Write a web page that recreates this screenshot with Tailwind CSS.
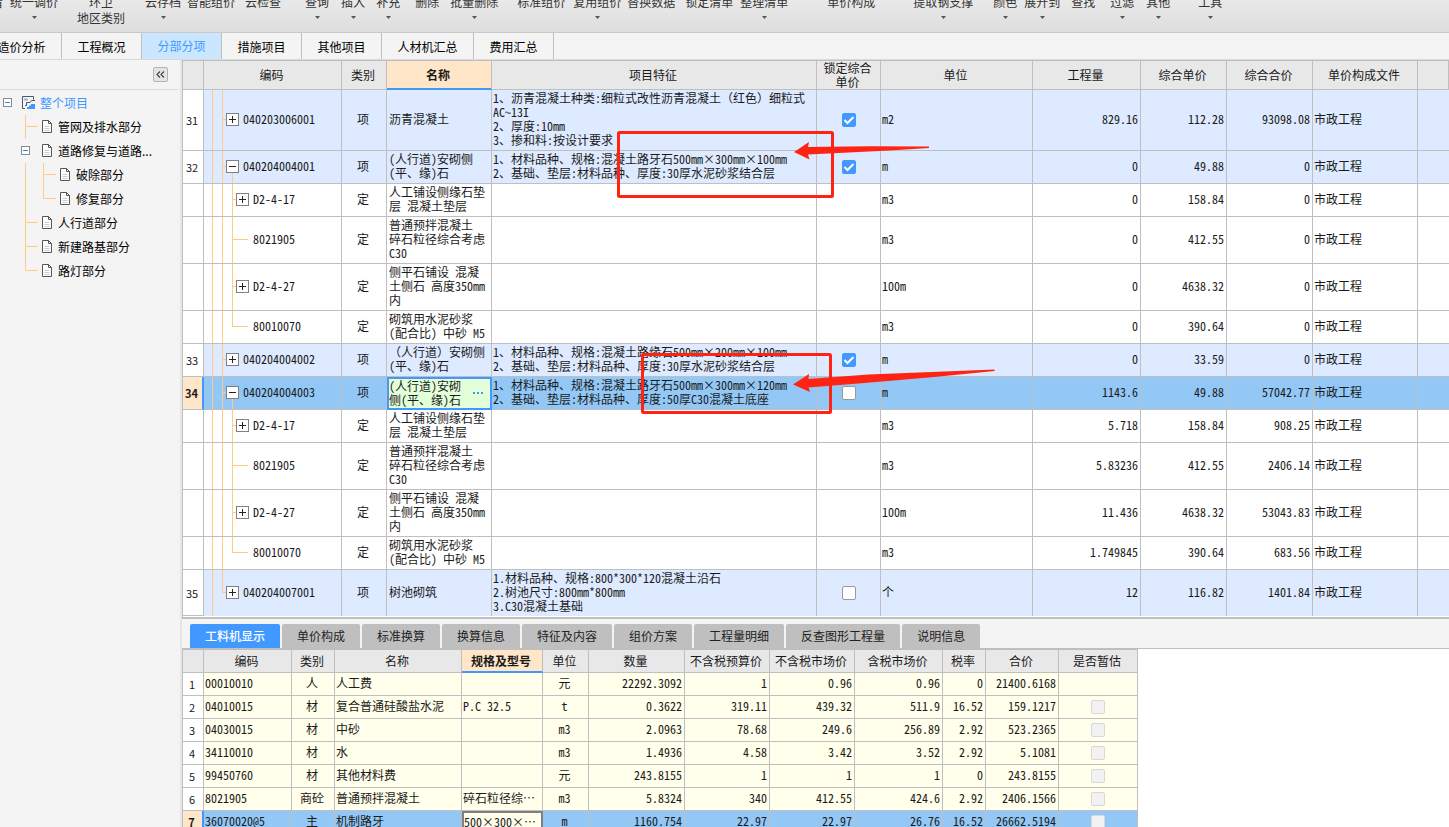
<!DOCTYPE html>
<html lang="zh-CN">
<head>
<meta charset="utf-8">
<title>分部分项</title>
<script src="https://cdn.jsdelivr.net/npm/@tailwindcss/browser@4"></script>
</head>
<body class="relative flex h-screen flex-col overflow-hidden bg-[#f4f4f4] font-['Noto_Sans_CJK_SC','Noto_Sans',sans-serif] text-[12px] leading-4 text-[#1a1a1a]">

<header class="h-[33px] shrink-0 overflow-hidden border-b border-[#c9c9c9] bg-linear-to-b from-[#e9e9e9] to-[#dedede]">
  <div id="toolbar" class="-mt-1.5 flex items-start whitespace-nowrap text-[#333]"></div>
</header>

<nav class="h-[27px] shrink-0 overflow-hidden border-b border-[#d9d9d9] bg-[#f4f4f4]">
  <div class="-ml-[18px] flex h-full text-black">
    <button class="w-20 border-r border-[#c0c0c0] pt-0.5 pb-px">造价分析</button>
    <button class="w-20 border-r border-[#c0c0c0] pt-0.5 pb-px">工程概况</button>
    <button class="w-20 border-r border-[#c0c0c0] bg-[#cbe6ff] pb-px text-[#4199ff]">分部分项</button>
    <button class="w-20 border-r border-[#c0c0c0] pt-0.5 pb-px">措施项目</button>
    <button class="w-20 border-r border-[#c0c0c0] pt-0.5 pb-px">其他项目</button>
    <button class="w-[92px] border-r border-[#c0c0c0] pt-0.5 pb-px">人材机汇总</button>
    <button class="w-20 border-r border-[#c0c0c0] pt-0.5 pb-px">费用汇总</button>
  </div>
</nav>

<main class="flex min-h-0 flex-1">
  <aside class="w-[180px] shrink-0 text-black">
    <div class="mr-0.5 flex h-[30px] items-center justify-end border-b border-[#dcdcdc] pr-2.5">
      <button aria-label="收起" class="flex size-[15px] items-center justify-center rounded-xs border border-[#b4b4b4] bg-[#e4e4e4]">
        <svg width="9" height="7" viewBox="0 0 9 7" fill="none" stroke="#444" stroke-width="1.2"><path d="M4 .5 1 3.5l3 3M8 .5 5 3.5l3 3"/></svg>
      </button>
    </div>
    <ul id="tree" class="pt-px"></ul>
  </aside>

  <div class="w-0.5 shrink-0 bg-[#e6e6e6]"></div>

  <section class="flex min-w-0 flex-1 flex-col">
    <div class="min-h-0 flex-1 overflow-hidden border-l border-[#bfbfbf] bg-white">
      <table class="w-full table-fixed border-separate border-spacing-0 leading-[14px]">
        <colgroup>
          <col class="w-[21px]"><col class="w-[138px]"><col class="w-[45px]"><col class="w-[105px]"><col class="w-[325px]"><col class="w-16"><col class="w-[152px]"><col class="w-[108px]"><col class="w-[86px]"><col class="w-[86px]"><col class="w-[105px]"><col>
        </colgroup>
        <thead id="bill-head"></thead>
        <tbody id="bill" class="font-['Noto_Sans_Mono_CJK_SC','Noto_Sans_CJK_SC',monospace] whitespace-pre"></tbody>
      </table>
    </div>

    <div class="flex h-[210px] shrink-0 flex-col overflow-hidden border-t-2 border-[#bfbfbf] bg-[#f4f4f4]">
      <div class="flex h-[30px] shrink-0 items-end gap-0.5 border-b border-[#bfbfbf] pl-2" id="detail-tabs"></div>
      <div class="min-h-0 flex-1 border-l border-[#bfbfbf] bg-white">
        <table class="w-[955px] table-fixed border-separate border-spacing-0 border-t border-[#bfbfbf] leading-[14px]">
          <colgroup>
            <col class="w-[21px]"><col class="w-[88px]"><col class="w-[43px]"><col class="w-[127px]"><col class="w-[81px]"><col class="w-[46px]"><col class="w-24"><col class="w-[85px]"><col class="w-[85px]"><col class="w-[88px]"><col class="w-[43px]"><col class="w-[73px]"><col class="w-[79px]">
          </colgroup>
          <thead id="res-head"></thead>
          <tbody id="res" class="font-['Noto_Sans_Mono_CJK_SC','Noto_Sans_CJK_SC',monospace] whitespace-pre"></tbody>
        </table>
      </div>
    </div>
  </section>
</main>

<svg class="pointer-events-none absolute top-0 left-0" width="1010" height="430" viewBox="0 0 1010 430" aria-hidden="true">
  <g fill="none" stroke="#ff2313" stroke-width="3" stroke-linejoin="round">
    <rect x="618.5" y="132.5" width="214" height="64" rx="1"/>
    <rect x="642.5" y="354.5" width="188" height="58" rx="1"/>
  </g>
  <g fill="#ff2313">
    <path d="M794 152 809 142l-1 5 62-.8 59 .3v1.5l-40 2.5-81 4 1.5 5z"/>
    <path d="M793 384.5 809 374l-.5 5 60-4.500 126-5v1.5l-60 6-70 6-56 4.500 1.5 4.500z"/>
  </g>
</svg>

<script>
const byId = id => document.getElementById(id);

/* Toolbar: [label, left margin class, drop-down arrow, second line] */
const caret = '<svg class="mx-auto mt-1.5" width="5" height="3" viewBox="0 0 5 3"><path d="M0 0h5L2.5 3z" fill="#555"/></svg>';
const tools = [
  ['看', '-ml-[9px]', 0], ['统一调价', 'ml-[7px]', 1], ['环卫', 'ml-[19px]', 0, '地区类别'], ['云存档', 'ml-5', 1],
  ['智能组价', 'ml-1.5', 0], ['云检查', 'ml-2.5', 0], ['查询', 'ml-6', 1], ['插入', 'ml-3', 1], ['补充', 'ml-[11px]', 1],
  ['删除', 'ml-[15px]', 0], ['批量删除', 'ml-[11px]', 1], ['标准组价', 'ml-[19px]', 0], ['复用组价', 'ml-2', 1],
  ['替换数据', 'ml-1.5', 0], ['锁定清单', 'ml-2.5', 0], ['整理清单', 'ml-[7px]', 1], ['单价构成', 'ml-[39px]', 0],
  ['提取钢支撑', 'ml-[38px]', 1], ['颜色', 'ml-5', 1], ['展开到', 'ml-[7px]', 1], ['查找', 'ml-[11px]', 0],
  ['过滤', 'ml-[15px]', 1], ['其他', 'ml-3', 1], ['工具', 'ml-7', 1]
];
byId('toolbar').innerHTML = tools.map(([t, m, arrow, sub]) =>
  `<button class="${m} shrink-0 text-center"><span class="block">${t}</span>${sub ? `<span class="block">${sub}</span>` : ''}${arrow ? caret : ''}</button>`).join('');

/* Project tree */
const minus = (x, y) => `<rect x="${x}.5" y="${y}.5" width="8" height="8" fill="#fff" stroke="#8a8a8a"/><path d="M${x + 2} ${y + 4}.5h5" stroke="#1c9ad6"/>`;
const docIcon = '<svg class="-mt-0.5 shrink-0" width="11" height="13" viewBox="0 0 11 13" fill="#fff" stroke="#555"><path d="M.5.5h6l3 3v9h-9z"/><path d="M6.5.5v3h3" fill="none"/><path d="M2.5 6.5h5M2.5 8.5h5M2.5 10.5h5" stroke="#ccc"/></svg>';
const rootIcon = '<svg class="-mt-px shrink-0" width="13" height="13" viewBox="0 0 13 13" fill="none"><path d="M11.5 3.500V.5H.5v12H3" stroke="#555"/><path d="M2 3.500h4" stroke="#7fbcff" stroke-width="2"/><path d="M3 9.500h1.500v-3H8l1.500-2H13" stroke="#555"/><path d="M5 13v-2h2V9.500h2V8h4v5z" fill="#4199ff"/></svg>';
const gutter = (w, path, box = '') => `<svg class="shrink-0" width="${w}" height="24" viewBox="0 0 ${w} 24" fill="none" aria-hidden="true"><path d="${path}" stroke="#ffcb85"/>${box}</svg>`;
const toggle = inner => `<button aria-label="折叠" class="shrink-0">${inner}</button>`;
const nodes = [
  [toggle(gutter(22, '', minus(3, 7))) + rootIcon, '整个项目', 'text-[#4199ff]'],
  [gutter(42, 'M25.5 0v24M25.5 11.5H38') + docIcon, '管网及排水部分', ''],
  [toggle(gutter(42, '', minus(21, 7))) + docIcon, '道路修复与道路...', ''],
  [gutter(60, 'M25.5 0v24M43.5 0v24M43.5 11.5H56') + docIcon, '破除部分', ''],
  [gutter(60, 'M25.5 0v24M43.5 0v11.5H56') + docIcon, '修复部分', ''],
  [gutter(42, 'M25.5 0v24M25.5 11.5H38') + docIcon, '人行道部分', ''],
  [gutter(42, 'M25.5 0v24M25.5 11.5H38') + docIcon, '新建路基部分', ''],
  [gutter(42, 'M25.5 0v11.5H38') + docIcon, '路灯部分', '']
];
byId('tree').innerHTML = nodes.map(([lead, t, c]) =>
  `<li class="flex h-6 items-center whitespace-nowrap">${lead}<a href="#" class="ml-[5px] ${c}">${t}</a></li>`).join('');

/* Table heads: the active column is highlighted */
const th = (label, active, size) =>
  `<th scope="col" class="${active ? 'border-r border-b-2 border-r-[#bfbfbf] border-b-[#4199ff] bg-[#ffe6c8] font-bold' : 'border-r border-b border-[#bfbfbf] bg-[#e8e8e8] font-normal'} py-0 pr-0.5 pl-0 ${size}">${label}</th>`;
byId('bill-head').innerHTML = '<tr>' + ['', '编码', '类别', '名称', '项目特征', '锁定综合<br>单价', '单位', '工程量', '综合单价', '综合合价', '单价构成文件', '']
  .map((h, i) => th(h, i === 3, 'h-[30px] border-t border-t-[#bfbfbf]')).join('') + '</tr>';
byId('res-head').innerHTML = '<tr>' + ['', '编码', '类别', '名称', '规格及型号', '单位', '数量', '不含税预算价', '不含税市场价', '含税市场价', '税率', '合价', '是否暂估']
  .map((h, i) => th(h, i === 4, 'h-[23px]')).join('') + '</tr>';

/* Bill of quantities: number, tree kind, code, class, name, feature, locked, unit, four figures */
const kids = (a, b, c, d) => [
  ['', 'sub', 'D2-4-17', '定', '人工铺设侧缘石垫\n层 混凝土垫层', '', null, 'm3', a[0], '158.84', a[1]],
  ['', 'leaf', '8021905', '定', '普通预拌混凝土\n碎石粒径综合考虑\nC30', '', null, 'm3', b[0], '412.55', b[1]],
  ['', 'sub', 'D2-4-27', '定', '侧平石铺设 混凝\n土侧石 高度350mm\n内', '', null, '100m', c[0], '4638.32', c[1]],
  ['', 'end', '80010070', '定', '砌筑用水泥砂浆\n(配合比) 中砂 M5', '', null, 'm3', d[0], '390.64', d[1]]
];
const bill = [
  ['31', 'closed', '040203006001', '项', '沥青混凝土', '1、沥青混凝土种类:细粒式改性沥青混凝土（红色）细粒式\nAC~13I\n2、厚度:10mm\n3、掺和料:按设计要求', true, 'm2', '829.16', '112.28', '93098.08'],
  ['32', 'open', '040204004001', '项', '(人行道)安砌侧\n(平、缘)石', '1、材料品种、规格:混凝土路牙石500mm×300mm×100mm\n2、基础、垫层:材料品种、厚度:30厚水泥砂浆结合层', true, 'm', '0', '49.88', '0'],
  ...kids(['0', '0'], ['0', '0'], ['0', '0'], ['0', '0']),
  ['33', 'closed', '040204004002', '项', '（人行道）安砌侧\n(平、缘)石', '1、材料品种、规格:混凝土路缘石500mm×200mm×100mm\n2、基础、垫层:材料品种、厚度:30厚水泥砂浆结合层', true, 'm', '0', '33.59', '0'],
  ['34', 'open', '040204004003', '项', '(人行道)安砌\n侧(平、缘)石', '1、材料品种、规格:混凝土路牙石500mm×300mm×120mm\n2、基础、垫层:材料品种、厚度:50厚C30混凝土底座', false, 'm', '1143.6', '49.88', '57042.77'],
  ...kids(['5.718', '908.25'], ['5.83236', '2406.14'], ['11.436', '53043.83'], ['1.749845', '683.56']),
  ['35', 'last', '040204007001', '项', '树池砌筑', '1.材料品种、规格:800*300*120混凝土沿石\n2.树池尺寸:800mm*800mm\n3.C30混凝土基础', false, '个', '12', '116.82', '1401.84']
];
const O = 'absolute bg-[#ffcb85] ';
const full1 = `<i class="${O} inset-y-0 left-2 w-px"></i>`;
const full2 = `<i class="${O} inset-y-0 left-[18px] w-px"></i>`;
const lines = {
  closed: full1 + full2 + `<i class="${O} top-1/2 left-[18px] -mt-px h-px w-1"></i>`,
  open: full1 + full2 + `<i class="${O} top-1/2 left-[18px] -mt-px h-px w-1"></i><i class="${O} top-1/2 bottom-0 left-7 w-px"></i>`,
  last: full1 + `<i class="${O} top-0 bottom-1/2 left-[18px] w-px"></i><i class="${O} top-1/2 left-[18px] -mt-px h-px w-1"></i>`,
  sub: full1 + full2 + `<i class="${O} inset-y-0 left-7 w-px"></i><i class="${O} top-1/2 left-7 -mt-px h-px w-1"></i>`,
  leaf: full1 + full2 + `<i class="${O} inset-y-0 left-7 w-px"></i><i class="${O} top-1/2 left-7 -mt-px h-px w-4"></i>`,
  end: full1 + full2 + `<i class="${O} top-0 bottom-1/2 left-7 w-px"></i><i class="${O} top-1/2 left-7 -mt-px h-px w-4"></i>`
};
const indent = { closed: 'pl-[22px]', open: 'pl-[22px]', last: 'pl-[22px]', sub: 'pl-8', leaf: 'pl-[49px]', end: 'pl-[49px]' };
const box = kind => kind === 'leaf' || kind === 'end' ? '' :
  `<button aria-label="展开或折叠" class="relative mr-1 block size-[13px] shrink-0"><svg width="13" height="13" viewBox="0 0 13 13"><rect x=".5" y=".5" width="12" height="12" fill="#fff" stroke="#808080"/><path d="${kind === 'open' ? 'M3 6.5h7' : 'M3 6.5h7M6.5 3v7'}" stroke="#222"/></svg></button>`;
const check = (on, name) =>
  `<label class="relative mx-auto block size-3.5"><input type="checkbox" aria-label="${name}" ${on ? 'checked' : ''} class="block size-3.5 appearance-none rounded-xs border border-[#999] bg-white checked:border-[#4199ff] checked:bg-[#4199ff]">${on ? '<svg class="absolute inset-0" width="14" height="14" viewBox="0 0 14 14" fill="none" stroke="#fff" stroke-width="2"><path d="m2.5 7 3 3 6-6"/></svg>' : ''}</label>`;
const numCell = (n, sel) =>
  `<th scope="row" class="border-b border-[#bfbfbf] py-0 pr-0.5 pl-0 text-center font-['Noto_Sans_CJK_SC',sans-serif] ${sel ? 'border-r-2 border-r-[#4199ff] bg-[#ffe6c8] font-bold' : 'border-r bg-white font-normal'} text-[11px]">${n}</th>`;

byId('bill').innerHTML = bill.map(([n, kind, code, cls, name, feat, lock, unit, qty, price, total], i) => {
  const sel = n === '34';
  const bottom = i === bill.length - 1 ? '' : 'border-b';
  const edge = `border-r ${bottom} border-[#bfbfbf]`;
  const c = `${edge} pt-px pb-[3px]`;
  const bg = sel ? 'bg-[#93c8f6]' : n ? 'bg-[#deeaff]' : 'bg-white';
  const nameCell = sel
    ? `<td class="border-2 border-[#4199ff] bg-[#e3ffd9] pt-0 pb-px pl-0"><div class="-mt-px flex items-center justify-between"><span>${name}</span><button aria-label="更多" class="mr-[7px] flex gap-0.5"><i class="size-0.5 bg-[#4199ff]"></i><i class="size-0.5 bg-[#4199ff]"></i><i class="size-0.5 bg-[#4199ff]"></i></button></div></td>`
    : `<td class="${c} pl-0.5">${name}</td>`;
  return `<tr class="${bg}">${numCell(n, sel)}<td class="${c} relative ${indent[kind]}">${lines[kind]}<div class="flex items-center">${box(kind)}${code}</div></td>` +
    `<td class="${c} pr-0.5 pl-0 text-center">${cls}</td>${nameCell}<td class="${c} pl-px">${feat}</td>` +
    `<td class="${edge} py-0">${lock === null ? '' : check(lock, '锁定综合单价 ' + n)}</td><td class="${c} pl-px">${unit}</td>` +
    `<td class="${c} pr-0.5 text-right">${qty}</td><td class="${c} pr-0.5 text-right">${price}</td><td class="${c} pr-0.5 text-right">${total}</td>` +
    `<td class="${c} pl-px">市政工程</td><td class="${bottom} border-[#bfbfbf]"></td></tr>`;
}).join('');

/* Detail tabs */
byId('detail-tabs').innerHTML = ['工料机显示', '单价构成', '标准换算', '换算信息', '特征及内容', '组价方案', '工程量明细', '反查图形工程量', '说明信息']
  .map((t, i) => `<button class="h-6 rounded-t-xs px-[15px] ${i ? 'bg-[#bfbfbf] text-[#222]' : 'bg-[#4199ff] font-medium text-white'}">${t}</button>`).join('');

/* Resources */
const res = [
  ['00010010', '人', '人工费', '', '元', '22292.3092', '1', '0.96', '0.96', '0', '21400.6168'],
  ['04010015', '材', '复合普通硅酸盐水泥', 'P.C 32.5', 't', '0.3622', '319.11', '439.32', '511.9', '16.52', '159.1217'],
  ['04030015', '材', '中砂', '', 'm3', '2.0963', '78.68', '249.6', '256.89', '2.92', '523.2365'],
  ['34110010', '材', '水', '', 'm3', '1.4936', '4.58', '3.42', '3.52', '2.92', '5.1081'],
  ['99450760', '材', '其他材料费', '', '元', '243.8155', '1', '1', '1', '0', '243.8155'],
  ['8021905', '商砼', '普通预拌混凝土', '碎石粒径综…', 'm3', '5.8324', '340', '412.55', '424.6', '2.92', '2406.1566'],
  ['36070020@5', '主', '机制路牙', '500×300×…', 'm', '1160.754', '22.97', '22.97', '26.76', '16.52', '26662.5194']
];
byId('res').innerHTML = res.map((r, i) => {
  const sel = i === 6;
  const c = 'h-[23px] border-r border-b border-[#bfbfbf]';
  return `<tr class="${sel ? 'bg-[#93c8f6]' : 'bg-[#ffffeb]'}">${numCell(i + 1, sel)}` + r.map((v, k) => {
    if (k === 3 && sel) return `<td class="border-2 border-[#808080] bg-[#ffffeb] px-0 pt-0 pb-0.5">${v}</td>`;
    const align = k === 1 || k === 4 ? 'pr-0.5 pl-0 text-center' : k < 4 ? 'pl-px' : 'pr-0.5 text-right';
    return `<td class="${c} pt-0 pb-0.5 ${align}">${v}</td>`;
  }).join('') + `<td class="${c} py-0">${i ? `<input type="checkbox" disabled aria-label="是否暂估 ${i + 1}" class="mx-auto block size-3.5 appearance-none rounded-xs border border-[#d8d8d8] bg-[#f2f2f2]">` : ''}</td></tr>`;
}).join('');
</script>
</body>
</html>
